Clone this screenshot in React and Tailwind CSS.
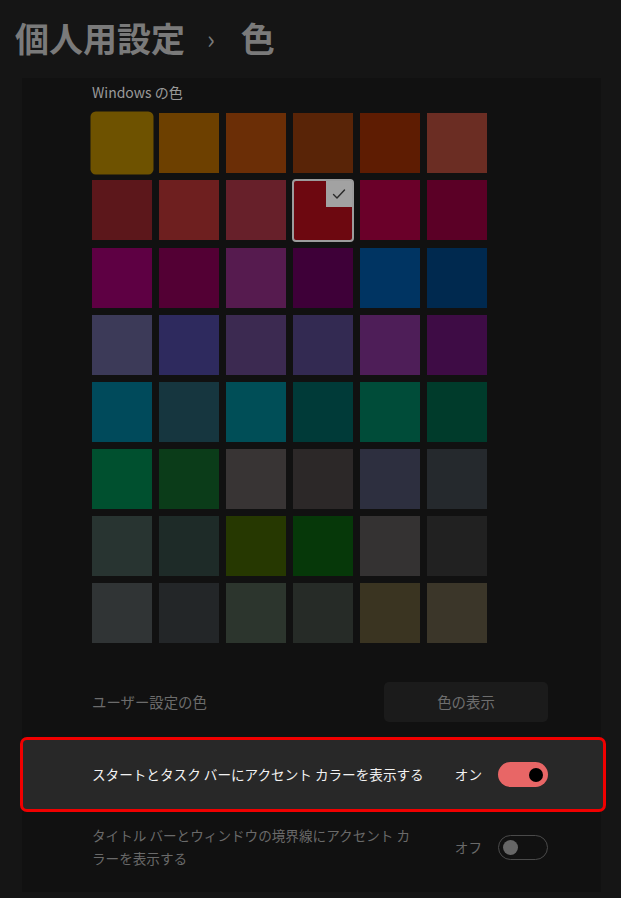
const rows = [
	['#6e5200', '#6d4000', '#6b2e06', '#592407', '#5e1c02', '#6b2d23'],
	['#5c171b', '#6e1f1f', '#67202a', '#6d0810', '#6a0029', '#5b0026'],
	['#5e0043', '#530034', '#561b4f', '#3e0038', '#003462', '#00294f'],
	['#3c3a58', '#2e2a5e', '#3c2a51', '#332a52', '#4e1e58', '#3e0c45'],
	['#004a5b', '#16363f', '#004e57', '#003a38', '#004c39', '#003b2b'],
	['#00502f', '#0b3c19', '#383434', '#2c2828', '#2d2f3f', '#25292d'],
	['#283431', '#1e2b28', '#263801', '#063809', '#343232', '#212121'],
	['#303435', '#232628', '#2c352d', '#262b27', '#3a3421', '#3b3629'],
]

function Swatch({ color, r, c }) {
	if (r === 0 && c === 0) {
		return <div className="w-[60px] h-[60px] rounded-[5px] scale-[1.05]" style={{ background: color }} />
	}
	if (r === 1 && c === 3) {
		return (
			<div className="relative w-[62px] h-[63px] -m-[1px] rounded-[4px] border-2 border-[#9c9c9c]" style={{ background: color }}>
				<div className="absolute top-0 right-0 w-[26px] h-[26px] bg-[#a2a2a2] flex items-center justify-center">
					<svg width="16" height="16" viewBox="0 0 16 16" fill="none">
						<path d="M2.5 8.5 L6 12 L13.5 4" stroke="#2a2a2a" strokeWidth="1.4" strokeLinecap="round" strokeLinejoin="round" />
					</svg>
				</div>
			</div>
		)
	}
	return <div className="w-[60px] h-[60px]" style={{ background: color }} />
}

export default function App() {
	return (
		<div className="w-[621px] h-[898px] bg-[#151515] overflow-hidden font-['Noto_Sans_CJK_JP',sans-serif]">
			<div className="h-[78px] pl-[15px] pt-[18px] flex items-start text-[#7a7a7a] font-bold">
				<span className="text-[34px] leading-[40px]">個人用設定</span>
				<span className="text-[26px] leading-[40px] ml-[22px] mr-[26px] font-normal">›</span>
				<span className="text-[34px] leading-[40px]">色</span>
			</div>

			<div className="ml-[22px] w-[579px] h-[814px] bg-[#111111] pt-[4px]">
				<div className="pl-[70px]">
					<div className="h-[20px] leading-[20px] text-[14px] text-[#9a9a9a]">Windows の色</div>
					<div className="mt-[11px] grid grid-cols-[repeat(6,60px)] gap-[7px]">
						{rows.map((row, r) =>
							row.map((color, c) => <Swatch key={r + '-' + c} color={color} r={r} c={c} />)
						)}
					</div>
					<div className="mt-[39px] flex items-center h-[40px]">
						<span className="text-[14.4px] text-[#6c6c6c]">ユーザー設定の色</span>
						<div className="ml-auto mr-[53px] w-[164px] h-[40px] rounded-[5px] bg-[#1b1b1b] flex items-center justify-center text-[14.4px] text-[#6e6e6e]">
							色の表示
						</div>
					</div>
				</div>

				<div className="mt-[15px] -ml-[2px] -mr-[5px] h-[75px] rounded-[7px] border-[3px] border-[#f00000] bg-[#282828] flex items-center pl-[69px]">
					<span className="text-[13.6px] text-[#f2f2f2]">スタートとタスク バーにアクセント カラーを表示する</span>
					<span className="ml-auto text-[13.6px] text-[#f2f2f2]">オン</span>
					<div className="ml-[16px] mr-[55px] w-[50px] h-[25px] rounded-full bg-[#e86666] flex items-center justify-end pr-[5px]">
						<div className="w-[14px] h-[14px] rounded-full bg-black" />
					</div>
				</div>

				<div className="flex items-center pl-[70px] pt-[12px]">
					<div className="text-[13.6px] leading-[23px] text-[#6a6a6a] w-[330px]">
						タイトル バーとウィンドウの境界線にアクセント カ<br />ラーを表示する
					</div>
					<span className="ml-auto text-[13.6px] text-[#6a6a6a]">オフ</span>
					<div className="ml-[16px] mr-[53px] w-[50px] h-[25px] rounded-full border border-[#4a4a4a] flex items-center pl-[4px]">
						<div className="w-[15px] h-[15px] rounded-full bg-[#666666]" />
					</div>
				</div>
			</div>
		</div>
	)
}
